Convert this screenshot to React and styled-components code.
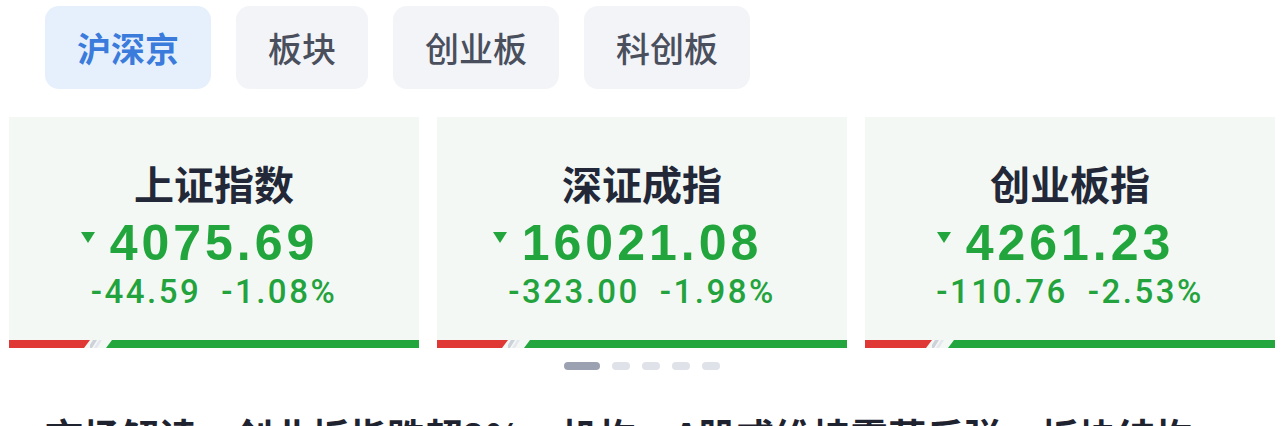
import React from 'react';
import styled, { createGlobalStyle } from 'styled-components';

const GlobalStyle = createGlobalStyle`
  body {
    margin: 0;
    background: #ffffff;
    font-family: "Noto Sans CJK SC", "Noto Sans", sans-serif;
  }
`

const Page = styled.div`
  width: 1284px;
  height: 426px;
  overflow: hidden;
  background: #ffffff;
`

const TabBar = styled.div`
  display: flex;
  gap: 25px;
  padding: 6px 0 0 45px;
`

const Tab = styled.div`
  height: 83px;
  padding: 0 32px;
  display: flex;
  align-items: center;
  border-radius: 14px;
  font-size: 34px;
  font-weight: ${p => (p.$active ? 700 : 500)};
  color: ${p => (p.$active ? '#3a7bdc' : '#4a4f5d')};
  background: ${p => (p.$active ? '#e6f0fc' : '#f3f4f8')};
`

const CardRow = styled.div`
  display: grid;
  grid-template-columns: repeat(3, 410px);
  gap: 18px;
  padding: 0 9px;
  margin-top: 28px;
`

const Card = styled.div`
  height: 231px;
  background: #f4f8f4;
  display: flex;
  flex-direction: column;
  align-items: center;
`

const Title = styled.div`
  margin-top: 42px;
  font-size: 40px;
  line-height: 48px;
  font-weight: 700;
  color: #232838;
`

const Price = styled.div`
  position: relative;
  margin-top: 7px;
  font-family: "Liberation Sans", Arial, sans-serif;
  font-size: 50px;
  line-height: 58px;
  font-weight: 700;
  letter-spacing: 4px;
  color: #22a53c;
`

const DownArrow = styled.span`
  position: absolute;
  left: -29px;
  top: 18px;
  width: 0;
  height: 0;
  border-left: 7.5px solid transparent;
  border-right: 7.5px solid transparent;
  border-top: 11px solid #22a53c;
`

const ChangeRow = styled.div`
  display: flex;
  gap: 20px;
  font-family: Roboto, "Liberation Sans", sans-serif;
  font-size: 33px;
  line-height: 40px;
  font-weight: 500;
  letter-spacing: 2.5px;
  color: #23a33d;
`

const Bar = styled.div`
  margin-top: auto;
  width: 100%;
  height: 8px;
  display: flex;
`

const RedPart = styled.div`
  background: #e03935;
  clip-path: polygon(0 0, 100% 0, calc(100% - 6px) 100%, 0 100%);
`

const GreenPart = styled.div`
  flex: 1;
  background: #22a63d;
  clip-path: polygon(6px 0, 100% 0, 100% 100%, 0 100%);
`

const Stripes = () => (
  <svg width="16" height="8" viewBox="0 0 16 8" style={{ flexShrink: 0 }}>
    <polygon points="3,0 7,0 2,8 -2,8" fill="#cdd1da" />
    <polygon points="9,0 12,0 7,8 4,8" fill="#e4e7ee" />
  </svg>
)

const Dots = styled.div`
  display: flex;
  justify-content: center;
  gap: 12px;
  margin-top: 14px;
`

const Dot = styled.span`
  width: ${p => (p.$active ? '36px' : '18px')};
  height: 8px;
  border-radius: 4px;
  background: ${p => (p.$active ? '#9ba1b0' : '#dfe2e8')};
`

const Headline = styled.div`
  margin-top: 42px;
  padding-left: 45px;
  font-size: 38px;
  line-height: 46px;
  font-weight: 700;
  color: #1f2330;
  white-space: nowrap;
`

const tabs = ['沪深京', '板块', '创业板', '科创板'];

const indices = [
  { name: '上证指数', price: '4075.69', diff: '-44.59', pct: '-1.08%', up: 81 },
  { name: '深证成指', price: '16021.08', diff: '-323.00', pct: '-1.98%', up: 71 },
  { name: '创业板指', price: '4261.23', diff: '-110.76', pct: '-2.53%', up: 67 },
];

const App = () => {
  return (
    <Page>
      <GlobalStyle />
      <TabBar>
        {tabs.map((t, i) => (
          <Tab key={t} $active={i === 0}>{t}</Tab>
        ))}
      </TabBar>
      <CardRow>
        {indices.map(item => (
          <Card key={item.name}>
            <Title>{item.name}</Title>
            <Price>
              <DownArrow />
              {item.price}
            </Price>
            <ChangeRow>
              <span>{item.diff}</span>
              <span>{item.pct}</span>
            </ChangeRow>
            <Bar>
              <RedPart style={{ width: item.up + 'px' }} />
              <Stripes />
              <GreenPart />
            </Bar>
          </Card>
        ))}
      </CardRow>
      <Dots>
        {[0, 1, 2, 3, 4].map(i => (
          <Dot key={i} $active={i === 0} />
        ))}
      </Dots>
      <Headline>市场解读：创业板指跌超2%，机构：A股或维持震荡反弹，板块结构</Headline>
    </Page>
  )
}

export default App
